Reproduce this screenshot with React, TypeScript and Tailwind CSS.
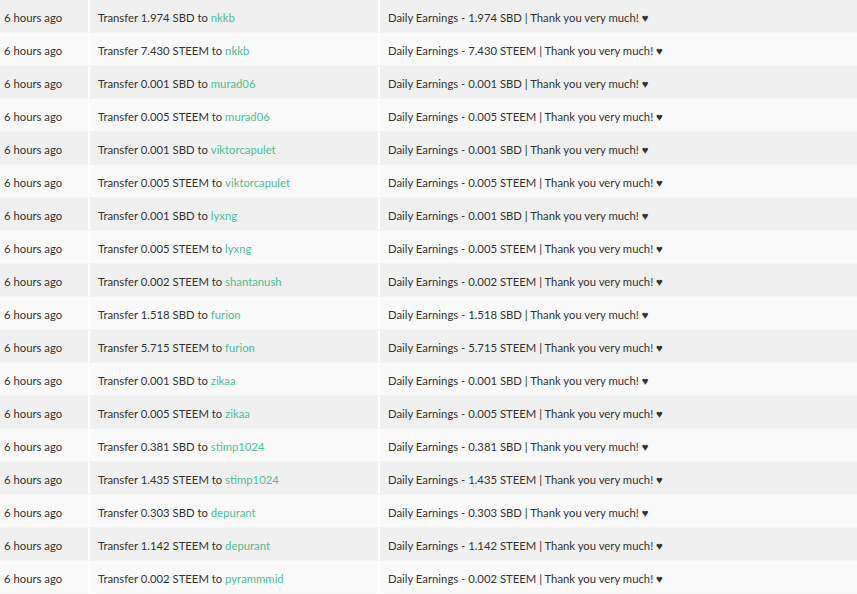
const rows: [string, string, string][] = [
  ['1.974', 'SBD', 'nkkb'],
  ['7.430', 'STEEM', 'nkkb'],
  ['0.001', 'SBD', 'murad06'],
  ['0.005', 'STEEM', 'murad06'],
  ['0.001', 'SBD', 'viktorcapulet'],
  ['0.005', 'STEEM', 'viktorcapulet'],
  ['0.001', 'SBD', 'lyxng'],
  ['0.005', 'STEEM', 'lyxng'],
  ['0.002', 'STEEM', 'shantanush'],
  ['1.518', 'SBD', 'furion'],
  ['5.715', 'STEEM', 'furion'],
  ['0.001', 'SBD', 'zikaa'],
  ['0.005', 'STEEM', 'zikaa'],
  ['0.381', 'SBD', 'stimp1024'],
  ['1.435', 'STEEM', 'stimp1024'],
  ['0.303', 'SBD', 'depurant'],
  ['1.142', 'STEEM', 'depurant'],
  ['0.002', 'STEEM', 'pyrammmid'],
];

export default function App() {
  return (
    <div className="w-[857px] h-[594px] overflow-hidden bg-white text-[11.3px] text-[#333]" style={{ fontFamily: 'Lato, "Open Sans", sans-serif' }}>
      {rows.map(([amt, cur, to], i) => (
        <div
          key={i}
          className={`grid grid-cols-[90px_290px_1fr] h-[33px] items-stretch border-b border-[#f4f4f4] ${i % 2 === 0 ? 'bg-[#f0f0f0]' : 'bg-[#fafafa]'}`}
        >
          <div className="flex items-center pt-[4px] pl-[4px] border-r-2 border-white">6 hours ago</div>
          <div className="flex items-center pt-[4px] pl-[8px] border-r-2 border-white">
            Transfer {amt} {cur} to&nbsp;<span className="text-[#4bbf97]">{to}</span>
          </div>
          <div className="flex items-center pt-[4px] pl-[8px]">
            Daily Earnings - {amt} {cur} | Thank you very much! ♥
          </div>
        </div>
      ))}
    </div>
  );
}
